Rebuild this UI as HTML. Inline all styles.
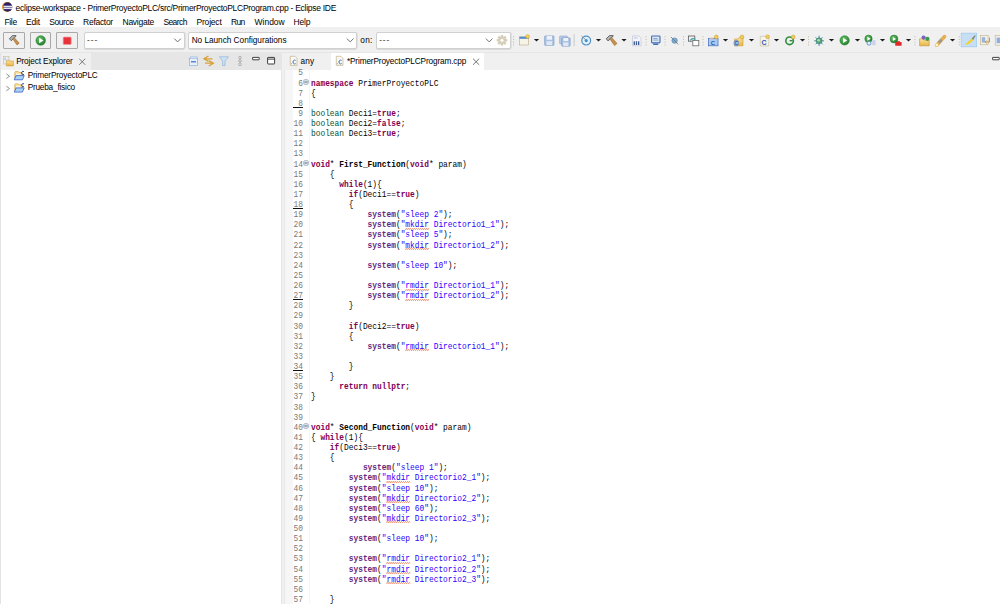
<!DOCTYPE html>
<html><head><meta charset="utf-8">
<style>
*{margin:0;padding:0;box-sizing:border-box}
html,body{width:1000px;height:604px;overflow:hidden;background:#fff;font-family:"Liberation Sans",sans-serif;color:#000;position:relative}
.a{position:absolute}
svg{position:absolute;overflow:visible}
.tx{position:absolute;white-space:nowrap;font-family:"Liberation Sans",sans-serif}
#codewrap{position:absolute;left:284px;top:69.5px;width:716px;height:535px}
.ln{position:absolute;left:0;width:23.2px;text-align:right;font-family:"Liberation Mono",monospace;font-size:9.6px;line-height:10px;color:#787878;transform:scaleX(0.82);transform-origin:0 0}
.cl{position:absolute;left:26.8px;font-family:"Liberation Mono",monospace;font-size:9.6px;line-height:10px;white-space:pre;color:#000;transform:scaleX(0.8194);transform-origin:0 0}
.k{color:#7f0055;font-weight:bold}
.t{color:#005032}
.f{color:#642880;font-weight:bold}
.s{color:#2a00ff}
.b{font-weight:bold}
.ul{position:absolute;left:9px;width:10px;height:1px;background:#111}
.fold{position:absolute;left:19px}
.sq{background-image:linear-gradient(135deg,transparent 35%,#f4a084 35% 65%,transparent 65%),linear-gradient(45deg,transparent 35%,#f4a084 35% 65%,transparent 65%);background-repeat:repeat-x;background-size:2.4px 1.6px;background-position:0 8.6px,1.2px 8.6px;color:#2a00ff}
.btn{position:absolute;top:32px;height:16.5px;border:1px solid #a9a9a9;background:#f0f0f0;border-radius:1px}
.combo{position:absolute;top:31.5px;height:17.5px;background:#fff;border:1px solid #d0d0d0;border-radius:2px;box-shadow:0 1px 0 #d9d9d9,1px 0 0 #e0e0e0}
.dd{position:absolute;top:39px;width:0;height:0;border-left:2.6px solid transparent;border-right:2.6px solid transparent;border-top:2.8px solid #1a1a1a}
.dots{position:absolute;top:36px;width:1px;height:10px;background:repeating-linear-gradient(#c2b8a3 0 1px,transparent 1px 3px)}

</style></head><body>
<!-- toolbar bg -->
<div class="a" style="left:0;top:27px;width:1000px;height:25.5px;background:#f0f0f0"></div>
<div class="a" style="left:0;top:52px;width:1000px;height:1px;background:#e6e6e6"></div>

<!-- left panel -->
<div class="a" style="left:0;top:53px;width:281px;height:551px;background:#fff"></div>
<div class="a" style="left:0;top:53px;width:1px;height:551px;background:#e3e3e3"></div>
<div class="a" style="left:1px;top:53px;width:280px;height:16.5px;background:#e6e6e6"></div>
<div class="a" style="left:1px;top:53px;width:89.5px;height:16.5px;background:#f0f0f0"></div>
<div class="a" style="left:281px;top:53px;width:1px;height:551px;background:#e6e6e6"></div>
<div class="a" style="left:282px;top:53px;width:2px;height:551px;background:#f0f0f0"></div>

<!-- editor -->
<div class="a" style="left:284px;top:53px;width:716px;height:16.5px;background:#f0f0f0"></div>
<div class="a" style="left:330.8px;top:53px;width:153px;height:16.5px;background:#fff"></div>
<div class="a" style="left:284px;top:69.5px;width:1.2px;height:535px;background:#e8e8e8"></div>
<div class="a" style="left:285.2px;top:69.5px;width:7.8px;height:535px;background:#f6f6f6"></div>
<div class="a" style="left:308.5px;top:69.5px;width:0.6px;height:535px;background:#f6f6f6"></div>

<!-- buttons / combos -->
<div class="btn" style="left:3.3px;width:21.3px"></div>
<div class="btn" style="left:30px;width:21.3px"></div>
<div class="btn" style="left:56.2px;width:21.5px"></div>
<div class="combo" style="left:84.3px;width:100.5px"></div>
<div class="combo" style="left:188.3px;width:168.7px"></div>
<div class="combo" style="left:375.6px;width:135px"></div>
<svg class="a" style="left:0;top:0" width="1000" height="604" viewBox="0 0 1000 604">
<defs>
 <radialGradient id="gg" cx="40%" cy="35%" r="70%"><stop offset="0" stop-color="#6cc46c"/><stop offset="1" stop-color="#1f7a2a"/></radialGradient>
 <linearGradient id="fy" x1="0" y1="0" x2="0" y2="1"><stop offset="0" stop-color="#fbe39a"/><stop offset="1" stop-color="#e9b447"/></linearGradient>
</defs>
<!-- eclipse logo -->
<circle cx="6.9" cy="7" r="5" fill="#eba43e"/>
<circle cx="7.6" cy="7" r="4.75" fill="#2c1f66"/>
<rect x="3.3" y="5.7" width="9" height="1.5" fill="#e6e4f0"/>
<rect x="3.3" y="7.6" width="9" height="1.5" fill="#e6e4f0"/>

<!-- hammer btn1 -->
<polygon points="13.2,39.4 14.6,38 19.2,43.2 17,45" fill="#c68f4c" stroke="#a0682c" stroke-width="0.6"/>
<polygon points="9.4,38.8 12.4,35.6 16,35.6 15.8,36.6 14.2,37.4 11.4,40.8" fill="#b4b4b4" stroke="#5c5c5c" stroke-width="0.9" stroke-linejoin="round"/>
<!-- play btn2 -->
<circle cx="40.7" cy="40.5" r="4.8" fill="url(#gg)" stroke="#237a2c" stroke-width="0.5"/>
<polygon points="39.1,37.7 43.5,40.5 39.1,43.3" fill="#fff"/>
<!-- stop btn3 -->
<rect x="63.2" y="37.1" width="8" height="7.4" rx="0.8" fill="#e8323c" stroke="#f29a9a" stroke-width="0.7"/>

<!-- combo chevrons -->
<polyline points="174.3,38.6 177.6,41.9 180.9,38.6" fill="none" stroke="#5c5c5c" stroke-width="0.9"/>
<polyline points="346.9,38.6 350.2,41.9 353.5,38.6" fill="none" stroke="#5c5c5c" stroke-width="0.9"/>
<polyline points="485.9,38.6 489.2,41.9 492.5,38.6" fill="none" stroke="#5c5c5c" stroke-width="0.9"/>
<!-- gear -->
<g transform="translate(502,40.3)" fill="#d5cfb9">
 <circle r="3.7"/>
 <rect x="-1.2" y="-5.3" width="2.4" height="10.6"/>
 <rect x="-5.3" y="-1.2" width="10.6" height="2.4"/>
 <rect x="-1.2" y="-5.3" width="2.4" height="10.6" transform="rotate(45)"/>
 <rect x="-1.2" y="-5.3" width="2.4" height="10.6" transform="rotate(-45)"/>
 <circle r="1.5" fill="#fff"/>
</g>

<!-- dotted separators -->
<g fill="#c4b9a4">
 <rect x="513" y="36.3" width="1" height="1"/><rect x="513" y="39" width="1" height="1"/><rect x="513" y="41.7" width="1" height="1"/><rect x="513" y="44.4" width="1" height="1"/>
 <rect x="645.5" y="36.3" width="1" height="1"/><rect x="645.5" y="39" width="1" height="1"/><rect x="645.5" y="41.7" width="1" height="1"/><rect x="645.5" y="44.4" width="1" height="1"/>
 <rect x="664.5" y="36.3" width="1" height="1"/><rect x="664.5" y="39" width="1" height="1"/><rect x="664.5" y="41.7" width="1" height="1"/><rect x="664.5" y="44.4" width="1" height="1"/>
 <rect x="683" y="36.3" width="1" height="1"/><rect x="683" y="39" width="1" height="1"/><rect x="683" y="41.7" width="1" height="1"/><rect x="683" y="44.4" width="1" height="1"/>
 <rect x="702.5" y="36.3" width="1" height="1"/><rect x="702.5" y="39" width="1" height="1"/><rect x="702.5" y="41.7" width="1" height="1"/><rect x="702.5" y="44.4" width="1" height="1"/>
 <rect x="808" y="36.3" width="1" height="1"/><rect x="808" y="39" width="1" height="1"/><rect x="808" y="41.7" width="1" height="1"/><rect x="808" y="44.4" width="1" height="1"/>
 <rect x="914.5" y="36.3" width="1" height="1"/><rect x="914.5" y="39" width="1" height="1"/><rect x="914.5" y="41.7" width="1" height="1"/><rect x="914.5" y="44.4" width="1" height="1"/>
 <rect x="958.8" y="36.3" width="1" height="1"/><rect x="958.8" y="39" width="1" height="1"/><rect x="958.8" y="41.7" width="1" height="1"/><rect x="958.8" y="44.4" width="1" height="1"/>
</g>
<rect x="573.6" y="34.2" width="1" height="12" fill="#c9c9c9"/>

<!-- dropdown arrows -->
<g fill="#1b1b1b">
 <polygon points="533.9,39.1 539.1,39.1 536.5,41.6"/>
 <polygon points="595.9,39.1 601.1,39.1 598.5,41.6"/>
 <polygon points="621.4,39.1 626.6,39.1 624,41.6"/>
 <polygon points="722.9,39.1 728.1,39.1 725.5,41.6"/>
 <polygon points="748.9,39.1 754.1,39.1 751.5,41.6"/>
 <polygon points="773.9,39.1 779.1,39.1 776.5,41.6"/>
 <polygon points="799.9,39.1 805.1,39.1 802.5,41.6"/>
 <polygon points="828.9,39.1 834.1,39.1 831.5,41.6"/>
 <polygon points="854.9,39.1 860.1,39.1 857.5,41.6"/>
 <polygon points="879.9,39.1 885.1,39.1 882.5,41.6"/>
 <polygon points="905.9,39.1 911.1,39.1 908.5,41.6"/>
 <polygon points="949.9,39.1 955.1,39.1 952.5,41.6"/>
</g>

<!-- new window -->
<rect x="519.5" y="36.8" width="9" height="8.2" fill="#f6f4e6" stroke="#bba982" stroke-width="0.6"/>
<rect x="519.5" y="36.8" width="9" height="2" fill="#4f8ad0"/>
<circle cx="527.6" cy="36.6" r="1.9" fill="#f3cf5e" stroke="#c4962a" stroke-width="0.5"/>
<!-- save -->
<rect x="544.6" y="35.9" width="9.4" height="9.5" rx="0.8" fill="#a9c1e2" stroke="#7797c6" stroke-width="0.6"/>
<rect x="546.6" y="36.1" width="5.4" height="3.6" fill="#eef3fa"/>
<rect x="546.4" y="41.2" width="5.8" height="4" fill="#dfe8f3"/>
<!-- save all -->
<rect x="559.5" y="35.9" width="8" height="8" rx="0.8" fill="#b8cbe6" stroke="#8aa6cc" stroke-width="0.5"/>
<rect x="561.6" y="37.8" width="8.6" height="8.4" rx="0.8" fill="#a9c1e2" stroke="#7797c6" stroke-width="0.6"/>
<rect x="563.4" y="38" width="4.8" height="3" fill="#eef3fa"/>
<rect x="563.2" y="42.4" width="5.2" height="3.6" fill="#dfe8f3"/>
<!-- debug target -->
<circle cx="586.2" cy="40.6" r="4.4" fill="#e4f0f9" stroke="#4d90c6" stroke-width="1.2"/>
<circle cx="586.2" cy="40.6" r="1.6" fill="#4d90c6"/>
<line x1="581.5" y1="36" x2="586" y2="40" stroke="#8a8a8a" stroke-width="0.9"/>
<!-- hammer 2 -->
<polygon points="610.2,39.4 611.8,37.8 617,43.4 614.6,45.6" fill="#c68f4c" stroke="#a0682c" stroke-width="0.6"/>
<polygon points="606.2,38.8 609.4,35.6 613.2,35.6 613,36.6 611.2,37.4 608.2,41" fill="#b4b4b4" stroke="#5c5c5c" stroke-width="0.9" stroke-linejoin="round"/>
<!-- doc 010 -->
<polygon points="632.5,35.9 638.8,35.9 641,38.1 641,45.8 632.5,45.8" fill="#f3f3f9" stroke="#b0b6cc" stroke-width="0.5"/>
<rect x="633.8" y="37.6" width="3.8" height="0.7" fill="#9ab0d4"/>
<rect x="633.6" y="41.3" width="1.3" height="3.7" fill="#3e5a90"/>
<rect x="635.8" y="41.3" width="1.3" height="3.7" fill="#3e5a90"/>
<rect x="638" y="41.3" width="1.3" height="3.7" fill="#3e5a90"/>
<!-- monitor -->
<rect x="651.6" y="36" width="8.4" height="6.9" rx="0.8" fill="#dce8f6" stroke="#3f6cb4" stroke-width="1.1"/>
<rect x="653.3" y="38" width="4.2" height="0.7" fill="#6a8cc4"/><rect x="653.3" y="39.7" width="5" height="0.7" fill="#6a8cc4"/>
<rect x="653.2" y="43.6" width="5" height="1.4" fill="#3f6cb4"/>
<!-- link -->
<circle cx="674.6" cy="40.6" r="2.7" fill="#7eaed6" stroke="#4d7ea6" stroke-width="0.6"/>
<line x1="671" y1="37" x2="678.2" y2="44.4" stroke="#6e6e6e" stroke-width="0.8"/>
<!-- two windows -->
<rect x="688.6" y="36" width="6.2" height="5.2" fill="none" stroke="#5a5a5a" stroke-width="0.8"/>
<rect x="692.8" y="40.4" width="6" height="5.4" fill="#fff" stroke="#6a6a6a" stroke-width="0.8"/>
<path d="M690.2,40.5 Q692,37.6 695.5,39.2" fill="none" stroke="#36a3a8" stroke-width="1.2"/>
<!-- C project -->
<rect x="708.6" y="38.6" width="9.4" height="7.2" fill="#a9cbf1" stroke="#3a66c2" stroke-width="0.7"/>
<rect x="709.3" y="37.6" width="4" height="1.3" fill="#e4b8a0"/>
<text x="710.8" y="44.6" font-family="Liberation Sans" font-weight="bold" font-size="6" fill="#2c58a8">C</text>
<circle cx="716.3" cy="37" r="1.9" fill="#f2cd5a" stroke="#c4962a" stroke-width="0.5"/>
<!-- C folder -->
<path d="M734.5,39 h3.5 l1,-1.4 h4 v8.2 h-8.5z" fill="url(#fy)" stroke="#cf9a3a" stroke-width="0.6"/>
<rect x="734" y="40.4" width="4.5" height="5.4" rx="2" fill="#9cc0ee" stroke="#4a74c0" stroke-width="0.6"/>
<text x="734.8" y="44.8" font-family="Liberation Sans" font-weight="bold" font-size="4.6" fill="#2c58a8">C</text>
<circle cx="742" cy="37" r="1.9" fill="#f2cd5a" stroke="#c4962a" stroke-width="0.5"/>
<!-- C file -->
<polygon points="760.3,36.3 766.5,36.3 768.8,38.6 768.8,46 760.3,46" fill="#f4f2ea" stroke="#c2b896" stroke-width="0.6"/>
<text x="761.6" y="44.8" font-family="Liberation Sans" font-weight="bold" font-size="7" fill="#3156b8">C</text>
<circle cx="767.6" cy="36.8" r="1.9" fill="#f2cd5a" stroke="#c4962a" stroke-width="0.5"/>
<!-- G class -->
<circle cx="789.6" cy="40.8" r="3.8" fill="none" stroke="#2e8e3e" stroke-width="1.6"/>
<rect x="789.6" y="40" width="3" height="1.4" fill="#2e8e3e"/>
<circle cx="793.2" cy="37" r="1.9" fill="#f2cd5a" stroke="#c4962a" stroke-width="0.5"/>
<!-- bug -->
<g stroke="#3c8f96" stroke-width="0.9">
 <line x1="814.2" y1="40.8" x2="824" y2="40.8"/><line x1="819.1" y1="35.6" x2="819.1" y2="46"/>
 <line x1="815.6" y1="37.3" x2="822.6" y2="44.3"/><line x1="822.6" y1="37.3" x2="815.6" y2="44.3"/>
</g>
<circle cx="819.1" cy="40.8" r="3" fill="#5aa07a" stroke="#2e7f88" stroke-width="0.6"/>
<circle cx="818.6" cy="40.3" r="1.3" fill="#b8e0a0"/>
<!-- run -->
<circle cx="844.6" cy="40.4" r="4.7" fill="url(#gg)" stroke="#237a2c" stroke-width="0.5"/>
<polygon points="843.1,37.8 847.3,40.4 843.1,43" fill="#fff"/>
<!-- run ext -->
<circle cx="868.5" cy="38.8" r="3.7" fill="url(#gg)" stroke="#237a2c" stroke-width="0.5"/>
<polygon points="867.4,36.8 870.6,38.8 867.4,40.8" fill="#fff"/>
<circle cx="869" cy="43.2" r="2" fill="#e0ecf8" stroke="#4e86c8" stroke-width="0.8"/>
<rect x="872.2" y="40.2" width="3.4" height="5" fill="#c8d4e6"/>
<!-- run red -->
<circle cx="894" cy="39" r="3.9" fill="url(#gg)" stroke="#237a2c" stroke-width="0.5"/>
<polygon points="892.8,36.9 896.1,39 892.8,41.1" fill="#fff"/>
<rect x="895.2" y="42" width="6.4" height="3.8" rx="0.6" fill="#e02828"/>
<rect x="897" y="41" width="2.8" height="1.4" fill="#e04040"/>
<!-- open folder with dots -->
<path d="M919.6,38.8 h3.4 l1,1.2 h5.2 v5.8 h-9.6z" fill="url(#fy)" stroke="#c48f34" stroke-width="0.6"/>
<circle cx="923.6" cy="37.6" r="2.1" fill="#7a64c0"/>
<circle cx="927.4" cy="38.8" r="2.1" fill="#3a9a48"/>
<!-- marker pen -->
<line x1="936.6" y1="45.2" x2="944.6" y2="36.6" stroke="#e4b050" stroke-width="3.6" stroke-linecap="round"/>
<line x1="938.8" y1="42.8" x2="941.6" y2="39.8" stroke="#9a9a9a" stroke-width="2.8"/>
<circle cx="936.8" cy="45" r="1.4" fill="#fff6c8"/>
<!-- highlight button -->
<rect x="961.2" y="33.2" width="15.4" height="13.6" fill="#c6dff5" stroke="#a3cdef" stroke-width="0.8"/>
<path d="M964.5,45 Q968,45.4 971,42.2 L973.2,40 L971.6,38.6 L969,41 Q966.6,43.2 964.5,45z" fill="#f4d12a"/>
<path d="M971.6,38.6 L975,35 L975.6,36 L973.2,40z" fill="#8a8a7a"/>
<!-- next doc -->
<rect x="980.5" y="35.6" width="7.6" height="9.2" fill="#f2f0e8" stroke="#c0b28a" stroke-width="0.6"/>
<rect x="981.8" y="37.2" width="3.4" height="5.4" fill="#9cb4dc"/>
<path d="M989.5,37.6 v4.4 h-4.2 M986.6,40.6 l-1.4,1.4 l1.4,1.4" fill="none" stroke="#c49a36" stroke-width="1"/>
<rect x="995.2" y="35.6" width="6" height="9.6" fill="#f2f0e8" stroke="#c0b28a" stroke-width="0.6"/>
<rect x="996.6" y="37.6" width="3.4" height="5.6" fill="#8fb0e0"/>

<!-- left panel header icons -->
<rect x="3.6" y="56.4" width="5.4" height="7.6" fill="#e6eef9" stroke="#cbb98e" stroke-width="0.6"/>
<rect x="4.6" y="57.6" width="1" height="2.4" fill="#9ab4dc"/>
<path d="M6.4,60.2 h2.4 l0.8,0.8 h3.8 v4.9 h-7z" fill="url(#fy)" stroke="#cf9b3e" stroke-width="0.6"/>
<line x1="79.2" y1="58.7" x2="85.2" y2="64.8" stroke="#5a5a5a" stroke-width="0.8"/>
<line x1="85.2" y1="58.7" x2="79.2" y2="64.8" stroke="#5a5a5a" stroke-width="0.8"/>

<rect x="190.6" y="56.8" width="7" height="7.4" fill="#d9e7f7" stroke="#9dbadf" stroke-width="0.5"/>
<rect x="189.4" y="58.2" width="8" height="7.4" fill="#e6effa" stroke="#82a7d6" stroke-width="0.6"/>
<rect x="191" y="61.2" width="5" height="1.2" fill="#3a70c0"/>
<path d="M208.5,56 l-4.6,2.8 l4.6,2.6 M204.4,58.8 h8" fill="none" stroke="#d8a234" stroke-width="1.3"/>
<path d="M208.8,60.6 l4.6,2.6 l-4.6,2.8 M213,63.2 h-8" fill="none" stroke="#d8a234" stroke-width="1.3"/>
<polygon points="219.4,56.8 228.4,56.8 225,60.9 225,65.6 222.6,65.6 222.6,60.9" fill="#cfe4f6" stroke="#7eaad2" stroke-width="0.6"/>
<circle cx="240" cy="57.6" r="1.3" fill="none" stroke="#8c8c8c" stroke-width="0.6"/>
<circle cx="240" cy="61" r="1.3" fill="none" stroke="#8c8c8c" stroke-width="0.6"/>
<circle cx="240" cy="64.4" r="1.3" fill="none" stroke="#8c8c8c" stroke-width="0.6"/>
<rect x="252.6" y="57.4" width="6.6" height="2.4" rx="0.3" fill="#fff" stroke="#2e2e2e" stroke-width="0.9"/>
<rect x="267.6" y="57.4" width="7" height="6.6" rx="0.5" fill="#fff" stroke="#3c3c3c" stroke-width="1"/>
<rect x="267.6" y="58.6" width="7" height="1" fill="#3c3c3c"/>

<!-- tree -->
<polyline points="6.3,73.9 9.6,76.2 6.3,78.5" fill="none" stroke="#8a8a8a" stroke-width="0.9"/>
<polyline points="6.3,86.2 9.6,88.5 6.3,90.8" fill="none" stroke="#8a8a8a" stroke-width="0.9"/>
<g id="fold1">
<path d="M14.8,78.6 v-6.2 q0,-0.9 0.9,-0.9 h2.4 l0.9,0.9 h2.6 q0.8,0 0.8,0.8 v2.4" fill="url(#fy)" stroke="#d2a44e" stroke-width="0.7"/>
<rect x="16" y="73.4" width="4.6" height="2.6" fill="#fdf6dc"/>
<polygon points="16.2,75.6 24.2,75.6 22.4,79.8 14.2,79.8" fill="#a9d2f6" stroke="#3761c4" stroke-width="0.8"/>
<path d="M24,71.6 a1.6,1.6 0 1 0 0,2.7" fill="none" stroke="#2d4f9c" stroke-width="1"/>
</g>
<use href="#fold1" transform="translate(0,12.3)"/>

<!-- editor tab icons -->
<polygon points="290.3,56.3 295,56.3 297,58.3 297,65.4 290.3,65.4" fill="#f6f9fd" stroke="#c9b07e" stroke-width="0.7"/>
<path d="M295.6,60.4 a1.7,1.9 0 1 0 0,3.2" fill="none" stroke="#3a6eb0" stroke-width="1"/>
<rect x="291" y="63.4" width="0.8" height="0.8" fill="#3a6eb0"/>
<polygon points="336.3,56.3 341,56.3 343,58.3 343,65.4 336.3,65.4" fill="#f6f9fd" stroke="#c9b07e" stroke-width="0.7"/>
<path d="M341.6,60.4 a1.7,1.9 0 1 0 0,3.2" fill="none" stroke="#3a6eb0" stroke-width="1"/>
<rect x="337" y="63.4" width="0.8" height="0.8" fill="#3a6eb0"/>
<line x1="473" y1="58.7" x2="479.2" y2="64.8" stroke="#505050" stroke-width="0.8"/>
<line x1="479.2" y1="58.7" x2="473" y2="64.8" stroke="#505050" stroke-width="0.8"/>
<rect x="992.6" y="57.4" width="6.6" height="2.4" rx="0.3" fill="#fff" stroke="#2e2e2e" stroke-width="0.9"/>
</svg>

<div class="tx" style="left:15.62px;top:3.77px;font-size:8.5px;line-height:9.775px;letter-spacing:-0.279px;color:#000">eclipse-workspace - PrimerProyectoPLC/src/PrimerProyectoPLCProgram.cpp - Eclipse IDE</div>
<div class="tx" style="left:4.42px;top:17.57px;font-size:8.5px;line-height:9.775px;letter-spacing:-0.310px;color:#000">File</div>
<div class="tx" style="left:26.02px;top:17.57px;font-size:8.5px;line-height:9.775px;letter-spacing:-0.194px;color:#000">Edit</div>
<div class="tx" style="left:49.22px;top:17.57px;font-size:8.5px;line-height:9.775px;letter-spacing:-0.433px;color:#000">Source</div>
<div class="tx" style="left:83.12px;top:17.57px;font-size:8.5px;line-height:9.775px;letter-spacing:-0.294px;color:#000">Refactor</div>
<div class="tx" style="left:122.52px;top:17.57px;font-size:8.5px;line-height:9.775px;letter-spacing:-0.255px;color:#000">Navigate</div>
<div class="tx" style="left:163.42px;top:17.57px;font-size:8.5px;line-height:9.775px;letter-spacing:-0.593px;color:#000">Search</div>
<div class="tx" style="left:196.52px;top:17.57px;font-size:8.5px;line-height:9.775px;letter-spacing:-0.198px;color:#000">Project</div>
<div class="tx" style="left:231.12px;top:17.57px;font-size:8.5px;line-height:9.775px;letter-spacing:-0.714px;color:#000">Run</div>
<div class="tx" style="left:254.62px;top:17.57px;font-size:8.5px;line-height:9.775px;letter-spacing:-0.033px;color:#000">Window</div>
<div class="tx" style="left:293.52px;top:17.57px;font-size:8.5px;line-height:9.775px;letter-spacing:-0.139px;color:#000">Help</div>
<div class="tx" style="left:87.03px;top:35.50px;font-size:8.25px;line-height:9.487px;letter-spacing:0.950px;color:#3a3a3a">---</div>
<div class="tx" style="left:191.63px;top:36.00px;font-size:8.25px;line-height:9.487px;letter-spacing:-0.020px;color:#000">No Launch Configurations</div>
<div class="tx" style="left:360.23px;top:36.00px;font-size:8.25px;line-height:9.487px;letter-spacing:0.337px;color:#000">on:</div>
<div class="tx" style="left:379.13px;top:35.50px;font-size:8.25px;line-height:9.487px;letter-spacing:0.900px;color:#3a3a3a">---</div>
<div class="tx" style="left:16.13px;top:56.70px;font-size:8.25px;line-height:9.487px;letter-spacing:-0.130px;color:#000">Project Explorer</div>
<div class="tx" style="left:27.63px;top:71.10px;font-size:8.25px;line-height:9.487px;letter-spacing:-0.172px;color:#000">PrimerProyectoPLC</div>
<div class="tx" style="left:27.63px;top:83.40px;font-size:8.25px;line-height:9.487px;letter-spacing:-0.204px;color:#000">Prueba_fisico</div>
<div class="tx" style="left:300.43px;top:56.80px;font-size:8.25px;line-height:9.487px;letter-spacing:0.220px;color:#000">any</div>
<div class="tx" style="left:346.93px;top:56.80px;font-size:8.25px;line-height:9.487px;letter-spacing:-0.139px;color:#000">*PrimerProyectoPLCProgram.cpp</div>
<div id="codewrap">
<div class="ln" style="top:-1.100px">5</div>
<div class="ln" style="top:9.025px">6</div>
<svg class="fold" style="top:9.625px" width="6" height="6" viewBox="0 0 6 6"><circle cx="3" cy="3" r="2.75" fill="#dae2ea" stroke="#a9b6c4" stroke-width="0.8"/><rect x="1.3" y="2.0" width="3.4" height="0.7" fill="#8696a6"/><rect x="1.3" y="3.3" width="3.4" height="0.7" fill="#8696a6"/></svg>
<div class="cl" style="top:9.025px"><span class="k">namespace</span> PrimerProyectoPLC</div>
<div class="ln" style="top:19.150px">7</div>
<div class="cl" style="top:19.150px">{</div>
<div class="ln" style="top:29.275px">8</div>
<div class="ul" style="top:37.175px"></div>
<div class="ln" style="top:39.400px">9</div>
<div class="cl" style="top:39.400px"><span class="t">boolean</span> Deci1=<span class="k">true</span>;</div>
<div class="ln" style="top:49.525px">10</div>
<div class="cl" style="top:49.525px"><span class="t">boolean</span> Deci2=<span class="k">false</span>;</div>
<div class="ln" style="top:59.650px">11</div>
<div class="cl" style="top:59.650px"><span class="t">boolean</span> Deci3=<span class="k">true</span>;</div>
<div class="ln" style="top:69.775px">12</div>
<div class="ln" style="top:79.900px">13</div>
<div class="ln" style="top:90.025px">14</div>
<svg class="fold" style="top:90.625px" width="6" height="6" viewBox="0 0 6 6"><circle cx="3" cy="3" r="2.75" fill="#dae2ea" stroke="#a9b6c4" stroke-width="0.8"/><rect x="1.3" y="2.0" width="3.4" height="0.7" fill="#8696a6"/><rect x="1.3" y="3.3" width="3.4" height="0.7" fill="#8696a6"/></svg>
<div class="cl" style="top:90.025px"><span class="k">void</span>* <span class="b">First_Function</span>(<span class="k">void</span>* param)</div>
<div class="ln" style="top:100.150px">15</div>
<div class="cl" style="top:100.150px">    {</div>
<div class="ln" style="top:110.275px">16</div>
<div class="cl" style="top:110.275px">      <span class="k">while</span>(1){</div>
<div class="ln" style="top:120.400px">17</div>
<div class="cl" style="top:120.400px">        <span class="k">if</span>(Deci1==<span class="k">true</span>)</div>
<div class="ln" style="top:130.525px">18</div>
<div class="ul" style="top:138.425px"></div>
<div class="cl" style="top:130.525px">        {</div>
<div class="ln" style="top:140.650px">19</div>
<div class="cl" style="top:140.650px">            <span class="f">system</span>(<span class="s">&quot;sleep 2&quot;</span>);</div>
<div class="ln" style="top:150.775px">20</div>
<div class="cl" style="top:150.775px">            <span class="f">system</span>(<span class="s">&quot;</span><span class="sq">mkdir</span><span class="s"> Directorio1_1&quot;</span>);</div>
<div class="ln" style="top:160.900px">21</div>
<div class="cl" style="top:160.900px">            <span class="f">system</span>(<span class="s">&quot;sleep 5&quot;</span>);</div>
<div class="ln" style="top:171.025px">22</div>
<div class="cl" style="top:171.025px">            <span class="f">system</span>(<span class="s">&quot;</span><span class="sq">mkdir</span><span class="s"> Directorio1_2&quot;</span>);</div>
<div class="ln" style="top:181.150px">23</div>
<div class="ln" style="top:191.275px">24</div>
<div class="cl" style="top:191.275px">            <span class="f">system</span>(<span class="s">&quot;sleep 10&quot;</span>);</div>
<div class="ln" style="top:201.400px">25</div>
<div class="ln" style="top:211.525px">26</div>
<div class="cl" style="top:211.525px">            <span class="f">system</span>(<span class="s">&quot;</span><span class="sq">rmdir</span><span class="s"> Directorio1_1&quot;</span>);</div>
<div class="ln" style="top:221.650px">27</div>
<div class="ul" style="top:229.550px"></div>
<div class="cl" style="top:221.650px">            <span class="f">system</span>(<span class="s">&quot;</span><span class="sq">rmdir</span><span class="s"> Directorio1_2&quot;</span>);</div>
<div class="ln" style="top:231.775px">28</div>
<div class="cl" style="top:231.775px">        }</div>
<div class="ln" style="top:241.900px">29</div>
<div class="ln" style="top:252.025px">30</div>
<div class="cl" style="top:252.025px">        <span class="k">if</span>(Deci2==<span class="k">true</span>)</div>
<div class="ln" style="top:262.150px">31</div>
<div class="cl" style="top:262.150px">        {</div>
<div class="ln" style="top:272.275px">32</div>
<div class="cl" style="top:272.275px">            <span class="f">system</span>(<span class="s">&quot;</span><span class="sq">rmdir</span><span class="s"> Directorio1_1&quot;</span>);</div>
<div class="ln" style="top:282.400px">33</div>
<div class="ln" style="top:292.525px">34</div>
<div class="ul" style="top:300.425px"></div>
<div class="cl" style="top:292.525px">        }</div>
<div class="ln" style="top:302.650px">35</div>
<div class="cl" style="top:302.650px">    }</div>
<div class="ln" style="top:312.775px">36</div>
<div class="cl" style="top:312.775px">      <span class="k">return</span> <span class="k">nullptr</span>;</div>
<div class="ln" style="top:322.900px">37</div>
<div class="cl" style="top:322.900px">}</div>
<div class="ln" style="top:333.025px">38</div>
<div class="ln" style="top:343.150px">39</div>
<div class="ln" style="top:353.275px">40</div>
<svg class="fold" style="top:353.875px" width="6" height="6" viewBox="0 0 6 6"><circle cx="3" cy="3" r="2.75" fill="#dae2ea" stroke="#a9b6c4" stroke-width="0.8"/><rect x="1.3" y="2.0" width="3.4" height="0.7" fill="#8696a6"/><rect x="1.3" y="3.3" width="3.4" height="0.7" fill="#8696a6"/></svg>
<div class="cl" style="top:353.275px"><span class="k">void</span>* <span class="b">Second_Function</span>(<span class="k">void</span>* param)</div>
<div class="ln" style="top:363.400px">41</div>
<div class="cl" style="top:363.400px">{ <span class="k">while</span>(1){</div>
<div class="ln" style="top:373.525px">42</div>
<div class="cl" style="top:373.525px">    <span class="k">if</span>(Deci3==<span class="k">true</span>)</div>
<div class="ln" style="top:383.650px">43</div>
<div class="cl" style="top:383.650px">    {</div>
<div class="ln" style="top:393.775px">44</div>
<div class="cl" style="top:393.775px">           <span class="f">system</span>(<span class="s">&quot;sleep 1&quot;</span>);</div>
<div class="ln" style="top:403.900px">45</div>
<div class="cl" style="top:403.900px">        <span class="f">system</span>(<span class="s">&quot;</span><span class="sq">mkdir</span><span class="s"> Directorio2_1&quot;</span>);</div>
<div class="ln" style="top:414.025px">46</div>
<div class="cl" style="top:414.025px">        <span class="f">system</span>(<span class="s">&quot;sleep 10&quot;</span>);</div>
<div class="ln" style="top:424.150px">47</div>
<div class="cl" style="top:424.150px">        <span class="f">system</span>(<span class="s">&quot;</span><span class="sq">mkdir</span><span class="s"> Directorio2_2&quot;</span>);</div>
<div class="ln" style="top:434.275px">48</div>
<div class="cl" style="top:434.275px">        <span class="f">system</span>(<span class="s">&quot;sleep 60&quot;</span>);</div>
<div class="ln" style="top:444.400px">49</div>
<div class="cl" style="top:444.400px">        <span class="f">system</span>(<span class="s">&quot;</span><span class="sq">mkdir</span><span class="s"> Directorio2_3&quot;</span>);</div>
<div class="ln" style="top:454.525px">50</div>
<div class="ln" style="top:464.650px">51</div>
<div class="cl" style="top:464.650px">        <span class="f">system</span>(<span class="s">&quot;sleep 10&quot;</span>);</div>
<div class="ln" style="top:474.775px">52</div>
<div class="ln" style="top:484.900px">53</div>
<div class="cl" style="top:484.900px">        <span class="f">system</span>(<span class="s">&quot;</span><span class="sq">rmdir</span><span class="s"> Directorio2_1&quot;</span>);</div>
<div class="ln" style="top:495.025px">54</div>
<div class="cl" style="top:495.025px">        <span class="f">system</span>(<span class="s">&quot;</span><span class="sq">rmdir</span><span class="s"> Directorio2_2&quot;</span>);</div>
<div class="ln" style="top:505.150px">55</div>
<div class="cl" style="top:505.150px">        <span class="f">system</span>(<span class="s">&quot;</span><span class="sq">rmdir</span><span class="s"> Directorio2_3&quot;</span>);</div>
<div class="ln" style="top:515.275px">56</div>
<div class="ln" style="top:525.400px">57</div>
<div class="cl" style="top:525.400px">    }</div>
</div>
</body></html>
